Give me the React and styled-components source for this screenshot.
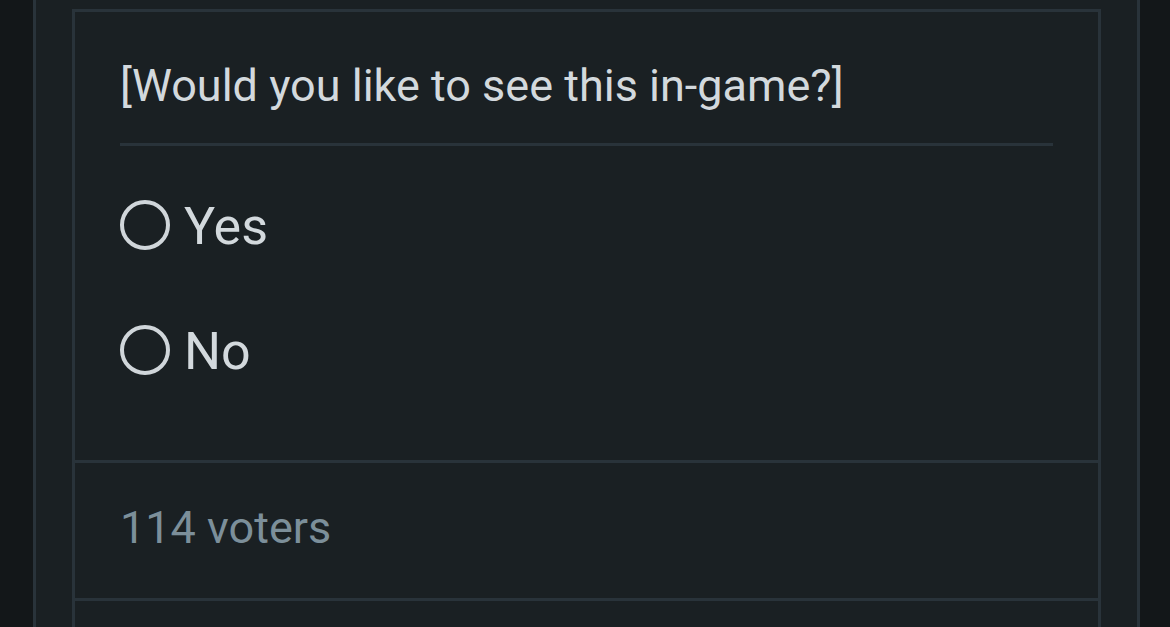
import React from "react"
import styled, { createGlobalStyle } from "styled-components"

const GlobalStyle = createGlobalStyle`
  html, body {
    margin: 0;
    padding: 0;
    background: #131719;
    font-family: Roboto, "Noto Sans", "Liberation Sans", sans-serif;
  }
`

const Panel = styled.div`
  margin: 0 30px 0 33px;
  min-height: 627px;
  box-sizing: border-box;
  background: #1a2023;
  border-left: 3px solid #29333a;
  border-right: 3px solid #29333a;
  padding: 9px 36px 0 36px;
`

const Card = styled.div`
  border: 3px solid #29333a;
  border-bottom: none;
  background: #1a2023;
`

const Body = styled.div`
  padding: 46px 45px 78px;
`

const Question = styled.h3`
  margin: 0;
  padding-bottom: 29px;
  border-bottom: 3px solid #29333a;
  font-size: 45px;
  line-height: 56px;
  font-weight: 400;
  color: #d3d9dd;
`

const Options = styled.div`
  display: flex;
  flex-direction: column;
  gap: 65px;
  margin-top: 51px;
`

const Option = styled.label`
  display: flex;
  align-items: center;
  gap: 14px;
  font-size: 52px;
  line-height: 60px;
  color: #d3d9dd;
  cursor: pointer;
`

const Radio = styled.span`
  width: 50px;
  height: 50px;
  box-sizing: border-box;
  border-radius: 50%;
  border: 4px solid #d0d6da;
  margin-top: -4px;
  flex: none;
`

const Footer = styled.div`
  border-top: 3px solid #29333a;
  border-bottom: 3px solid #29333a;
  padding: 40px 45px 45px;
  font-size: 45px;
  line-height: 50px;
  color: #7c8f9a;
`

const Rest = styled.div`
  height: 60px;
`

export default function App() {
  const options = ["Yes", "No"]
  return (
    <>
      <GlobalStyle />
      <Panel>
        <Card>
          <Body>
            <Question>[Would you like to see this in-game?]</Question>
            <Options>
              {options.map((o) => (
                <Option key={o}>
                  <Radio />
                  {o}
                </Option>
              ))}
            </Options>
          </Body>
          <Footer>114 voters</Footer>
          <Rest />
        </Card>
      </Panel>
    </>
  )
}
